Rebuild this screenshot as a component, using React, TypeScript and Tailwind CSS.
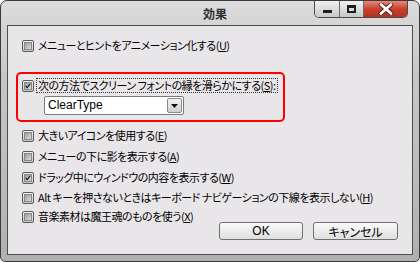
import React from "react";

const font = "font-['Noto_Sans_CJK_JP','Noto_Sans',sans-serif]";

function CheckBox({ checked }: { checked?: boolean }) {
  return (
    <div className="w-[12px] h-[12px] shrink-0 rounded-[2px] border border-[#5a5a5a] bg-[linear-gradient(180deg,#f4f4f4,#c8c8c8)] p-[1px]">
      <div className="w-full h-full border border-[#888] bg-[linear-gradient(135deg,#9a9a9a,#dedede)] flex items-center justify-center">
        {checked && (
          <svg width="8" height="8" viewBox="0 0 8 8">
            <path d="M1 4 L3 6.2 L7 1" fill="none" stroke="#1a1a1a" strokeWidth="1.6" />
          </svg>
        )}
      </div>
    </div>
  );
}

function Label({ text, k }: { text: string; k: string }) {
  return (
    <span className="whitespace-nowrap">
      {text}(<span className="underline">{k}</span>)
    </span>
  );
}

function Row({ checked, text, k, className = "" }: { checked?: boolean; text: string; k: string; className?: string }) {
  return (
    <div className={`flex items-center h-[13px] gap-[4px] pl-[14px] ${className}`}>
      <CheckBox checked={checked} />
      <Label text={text} k={k} />
    </div>
  );
}

export default function App() {
  return (
    <div className={`w-[420px] h-[262px] bg-white ${font} text-[11px] leading-[13px] tracking-[-0.5px] text-black [font-feature-settings:'palt']`}>
      <div className="relative w-full h-full rounded-t-[7px] rounded-b-[5px] border border-[#3a3a3a] bg-[linear-gradient(180deg,#dcdcdc_0%,#c6c6c6_30%,#bebebe_60%,#b0b0b0_100%)] flex flex-col overflow-hidden">
        <div className="h-[24px] shrink-0 flex items-center justify-center pl-[10px] text-[12px] tracking-normal font-bold text-[#303030]">
          効果
        </div>
        <div className="absolute top-0 right-[11px] flex h-[17px] rounded-b-[5px] border border-t-0 border-[#4a4a4a] overflow-hidden">
          <div className="w-[25px] h-full bg-[linear-gradient(180deg,#f0f0f0,#c8c8c8)] border-r border-[#6a6a6a] flex items-end justify-center pb-[4px]">
            <div className="w-[9px] h-[3px] bg-[#1e1e1e]" />
          </div>
          <div className="w-[24px] h-full bg-[linear-gradient(180deg,#f0f0f0,#c8c8c8)] border-r border-[#6a6a6a] flex items-center justify-center">
            <div className="w-[9px] h-[8px] border-[2px] border-t-[3px] border-[#1e1e1e]" />
          </div>
          <div className="w-[43px] h-full bg-[linear-gradient(180deg,#e88a7c,#c8402e_50%,#b03222)] flex items-center justify-center">
            <svg width="16" height="12" viewBox="0 0 16 12">
              <path d="M3 1.5 L13 10.5 M13 1.5 L3 10.5" stroke="#5a1a10" strokeWidth="4.6" strokeLinecap="round" />
              <path d="M3 1.5 L13 10.5 M13 1.5 L3 10.5" stroke="#ffffff" strokeWidth="2.8" strokeLinecap="round" />
            </svg>
          </div>
        </div>
        <div className="flex-1 mx-[6px] mb-[6px] border border-[#4e4e4e] bg-[#e9e6ea] flex flex-col pt-[13px]">
          <Row text="メニューとヒントをアニメーション化する" k="U" />
          <div className="mt-[20px] ml-[8px] w-[269px] h-[50px] rounded-[5px] border-2 border-[#ff0000] pt-[5px] pl-[4px] flex flex-col">
            <div className="flex items-center h-[13px] gap-[3px]">
              <CheckBox checked />
              <span className="whitespace-nowrap outline-1 outline-dotted outline-[#333] px-[1px]">
                次の方法でスクリーン フォントの縁を滑らかにする(<span className="underline">S</span>):
              </span>
            </div>
            <div className="mt-[4px] ml-[22px] w-[140px] h-[19px] rounded-[2px] border border-[#7a7a7a] bg-white flex items-center pl-[3px] pr-[1px]">
              <span className="flex-1 font-['Liberation_Sans',sans-serif] text-[12px] tracking-normal">ClearType</span>
              <div className="w-[15px] h-[15px] rounded-[2px] border border-[#8a8a8a] bg-[linear-gradient(180deg,#f4f4f4,#cfcfcf)] flex items-center justify-center">
                <svg width="7" height="4" viewBox="0 0 7 4">
                  <path d="M0 0 H7 L3.5 4 Z" fill="#111" />
                </svg>
              </div>
            </div>
          </div>
          <Row className="mt-[7px]" text="大きいアイコンを使用する" k="E" />
          <Row className="mt-[8px]" text="メニューの下に影を表示する" k="A" />
          <Row className="mt-[8px]" checked text="ドラッグ中にウィンドウの内容を表示する" k="W" />
          <Row className="mt-[7px]" text="Alt キーを押さないときはキーボード ナビゲーションの下線を表示しない" k="H" />
          <Row className="mt-[6px]" text="音楽素材は魔王魂のものを使う" k="X" />
          <div className="flex justify-end gap-[10px] pr-[14px] mt-[-1px] tracking-normal text-[12px]">
            <div className="w-[84px] h-[18px] rounded-[3px] border border-[#707070] bg-[linear-gradient(180deg,#fafafa,#dedede)] flex items-center justify-center font-['Liberation_Sans',sans-serif]">OK</div>
            <div className="w-[85px] h-[18px] rounded-[3px] border border-[#707070] bg-[linear-gradient(180deg,#fafafa,#dedede)] flex items-center justify-center">キャンセル</div>
          </div>
        </div>
      </div>
    </div>
  );
}
